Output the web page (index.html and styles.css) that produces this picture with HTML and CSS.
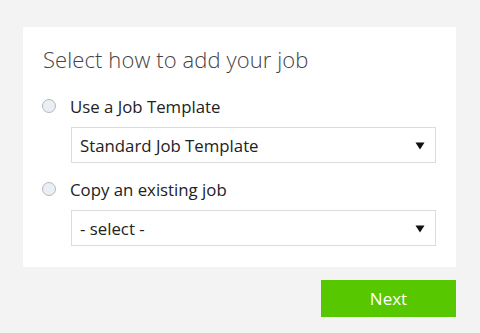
FILE: index.html
```html
<!DOCTYPE html>
<html lang="en">
<head>
  <meta charset="UTF-8">
  <title>Add job</title>
  <link rel="stylesheet" href="styles.css">
</head>
<body>
  <div class="page">
    <div class="card">
      <h2 class="title">Select how to add your job</h2>

      <label class="option">
        <span class="radio"></span>
        Use a Job Template
      </label>
      <div class="select">
        <span>Standard Job Template</span>
        <svg width="10" height="8" viewBox="0 0 10 8"><path d="M0.5 0.5 L9.5 0.5 L5 7.5 Z" fill="#111"/></svg>
      </div>

      <label class="option second">
        <span class="radio"></span>
        Copy an existing job
      </label>
      <div class="select">
        <span>- select -</span>
        <svg width="10" height="8" viewBox="0 0 10 8"><path d="M0.5 0.5 L9.5 0.5 L5 7.5 Z" fill="#111"/></svg>
      </div>
    </div>

    <div class="actions">
      <button class="next">Next</button>
    </div>
  </div>
</body>
</html>
```

FILE: styles.css
```css
body {
  margin: 0;
  background-color: #f3f3f3;
  font-family: "Open Sans", Arial, sans-serif;
}
.page {
  padding: 27px 24px 0 23px;
}
.card {
  background-color: #fff;
  padding: 20px 20px 21px 20px;
}
.title {
  margin: 0 0 23px 0;
  font-size: 22px;
  line-height: 24px;
  font-weight: 300;
  color: #444;
  letter-spacing: 0.1px;
}
.option {
  display: flex;
  align-items: center;
  height: 24px;
  font-size: 16.8px;
  color: #222;
  margin-bottom: 9px;
}
.option.second {
  margin-top: 14px;
}
.radio {
  width: 12px;
  height: 12px;
  border: 1px solid #b8b8b8;
  border-radius: 50%;
  background-color: #eaeff5;
  margin-left: -1px;
  margin-right: 14px;
}
.select {
  margin-left: 28px;
  height: 34px;
  border: 1px solid #dcdcdc;
  display: flex;
  align-items: center;
  justify-content: space-between;
  padding: 0 10px 0 8px;
  font-size: 16.8px;
  color: #222;
}
.select svg {
  margin-top: 2px;
}
.actions {
  display: flex;
  justify-content: flex-end;
  margin-top: 13px;
}
.next {
  width: 135px;
  height: 37px;
  border: none;
  background-color: #57c700;
  color: #fff;
  font-family: "Open Sans", Arial, sans-serif;
  font-size: 17px;
  cursor: pointer;
}
```
